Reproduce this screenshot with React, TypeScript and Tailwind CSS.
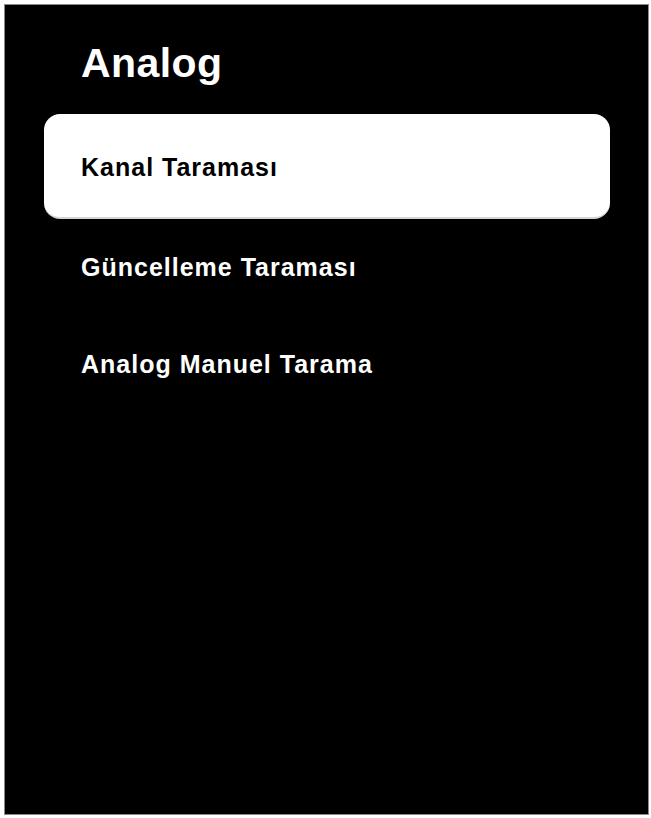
import React from 'react';

const items = ['Kanal Taraması', 'Güncelleme Taraması', 'Analog Manuel Tarama'];

export default function App() {
  return (
    <div className="w-[651px] h-[818px] bg-white pt-[4px] pl-[4px] pr-[2px] pb-[3px]">
      <div
        className="h-full border border-[#8a8a8a] bg-black"
        style={{ fontFamily: '"Liberation Sans", Arial, sans-serif' }}
      >
        {/* Title */}
        <h1 className="pt-[38px] pl-[76px] text-[41px] leading-none font-bold text-white tracking-[0.4px]">
          Analog
        </h1>

        {/* Menu */}
        <ul className="mt-[30px]">
          {items.map((label, i) =>
            i === 0 ? (
              <li
                key={label}
                className="ml-[39px] w-[566px] h-[105px] flex items-center pl-[37px] pt-[4px] rounded-[16px] bg-white border-b-2 border-[#d4d4d4]"
              >
                <span className="text-[25px] leading-none font-bold text-black tracking-[1px]">
                  {label}
                </span>
              </li>
            ) : (
              <li key={label} className="h-[97px] flex items-center pl-[76px]">
                <span className="text-[25px] leading-none font-bold text-white tracking-[1px]">
                  {label}
                </span>
              </li>
            ),
          )}
        </ul>
      </div>
    </div>
  );
}
